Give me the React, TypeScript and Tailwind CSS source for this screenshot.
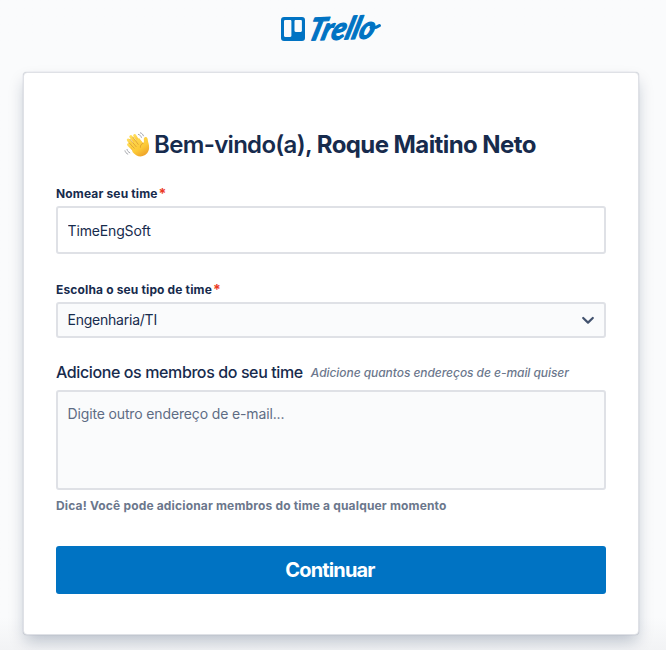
import React from "react";

function TrelloLogo() {
  return (
    <svg width="108" height="44" viewBox="0 0 108 44" className="overflow-visible text-[#0073c3]" role="img" aria-label="Trello">
      <path
        transform="translate(0 12)"
        fill="currentColor"
        fillRule="evenodd"
        d="M3 0h18a3 3 0 0 1 3 3v18a3 3 0 0 1-3 3H3a3 3 0 0 1-3-3V3a3 3 0 0 1 3-3Zm1.200 3a1.200 1.200 0 0 0-1.200 1.200v14.600c0 .7.500 1.200 1.200 1.200h5c.7 0 1.200-.5 1.200-1.200V4.200c0-.7-.5-1.200-1.200-1.200h-5Zm10.500 0c-.7 0-1.200.5-1.200 1.200v9.600c0 .7.500 1.200 1.200 1.200h5c.7 0 1.200-.5 1.200-1.200V4.200c0-.7-.5-1.200-1.200-1.200h-5Z"
      />
      <g
        transform="translate(25.500 35.500) rotate(-2) skewX(-18)"
        fill="currentColor"
        stroke="currentColor"
        strokeWidth="1.300"
        strokeLinejoin="round"
        className="font-['Lato',sans-serif] font-bold italic"
      >
        <text fontSize="31" textLength="66" lengthAdjust="spacingAndGlyphs">
          Trello
        </text>
      </g>
      <path d="M90 22.500q4 1.200 8.500-2" fill="none" stroke="currentColor" strokeWidth="3" strokeLinecap="round" />
    </svg>
  );
}

function WavingHand() {
  return (
    <svg width="26" height="26" viewBox="0 0 26 26" className="shrink-0" aria-hidden="true">
      <defs>
        <linearGradient id="skin" x1="0" y1="0" x2="0.6" y2="1">
          <stop offset="0" stopColor="#ffdc58" />
          <stop offset="0.65" stopColor="#fcc936" />
          <stop offset="1" stopColor="#efa52b" />
        </linearGradient>
      </defs>
      <g fill="none" stroke="url(#skin)" strokeLinecap="round" strokeWidth="3">
        <path d="M13.500 14 6.800 4.600" />
        <path d="M16 12 10.700 3.600" />
        <path d="M11 16 4.300 8" />
        <path d="M10 18 4.600 12.600" />
      </g>
      <path
        fill="url(#skin)"
        d="m7.500 12 7.500-6 4.200 5c.8-.3.800-1.400.6-3.300-.1-1.500.6-2.500 1.800-2.600 1.600-.1 2 1.200 2.300 3.300.3 2.300 1.400 4 1.200 7.700-.2 4-2.800 7-6.400 8-3.800 1-7.500-.8-10.200-4.200Z"
      />
      <g fill="none" stroke="#d99a30" strokeLinecap="round" strokeWidth=".8">
        <path d="m9 5.200 5.200 7.200M6 7.300l6.200 7.400M5.200 11l5 5.200M19.200 11.200c-2 .8-3 2.100-2.800 4.100" />
      </g>
      <g fill="none" stroke="#a4a6ac" strokeLinecap="round" strokeWidth="1">
        <path d="M14.400 2.400c1.500.4 2.500 1.400 3 3M16.400.8c1.500.5 2.500 1.500 3 3M3 17.400c.4 1.700 1.300 2.700 2.800 3.400M1 18.800c.4 1.600 1.300 2.600 2.800 3.300" />
      </g>
    </svg>
  );
}

function Label({ children, htmlFor }: { children: React.ReactNode; htmlFor: string }) {
  return (
    <label htmlFor={htmlFor} className="flex h-4 items-center text-[12px] leading-4 font-bold tracking-[0.150px]">
      {children}
      <span className="ml-[1px] text-[14px] text-[#eb3a25]">*</span>
    </label>
  );
}

export default function App() {
  return (
    <div className="flex h-[650px] w-[666px] flex-col overflow-hidden bg-[#fafbfc] bg-linear-to-b from-[#fafbfc] from-95% to-[#f2f3f5] font-['Inter',sans-serif] text-[#172b4d]">
      <header className="flex h-[72px] shrink-0 pt-[5px] pl-[281px]">
        <TrelloLogo />
      </header>

      <main className="mr-[27px] ml-[23px] flex h-[563px] shrink-0 flex-col rounded-[4px] border border-[#dfe1e6] bg-white px-8 pt-[58px] shadow-[0_8px_16px_-2px_rgba(9,30,66,0.25),0_0_1px_rgba(9,30,66,0.31)]">
        <h1 className="flex h-7 items-center justify-center gap-[4px] pr-[2px] text-[24px] leading-7 font-semibold tracking-[-0.690px] whitespace-nowrap">
          <WavingHand />
          <span>
            Bem-vindo(a), <span className="font-bold tracking-[-0.580px]">Roque Maitino Neto</span>
          </span>
        </h1>

        <form className="mt-[26px] flex flex-col" onSubmit={(e) => e.preventDefault()}>
          <div className="flex flex-col pt-px">
            <Label htmlFor="team-name">Nomear seu time</Label>
          </div>
          <input
            id="team-name"
            defaultValue="TimeEngSoft"
            className="mt-[4px] h-12 rounded-[3px] border-2 border-[#dfe1e6] bg-white px-[9.5px] text-[14px] tracking-[-0.150px] outline-none"
          />

          <div className="mt-[28px] flex flex-col">
            <Label htmlFor="team-type">Escolha o seu tipo de time</Label>
          </div>
          <button
            id="team-type"
            type="button"
            className="mt-[4px] flex h-9 items-center justify-between rounded-[3px] border-2 border-[#dfe1e6] bg-[#fafbfc] pr-[9px] pl-[9.5px] text-[14px] tracking-[-0.230px]"
          >
            <span className="pb-px">Engenharia/TI</span>
            <svg width="14" height="10" viewBox="0 0 14 10" aria-hidden="true">
              <path d="m2.200 3 4.800 4.600 4.800-4.600" fill="none" stroke="#42526e" strokeWidth="2.200" strokeLinecap="round" strokeLinejoin="round" />
            </svg>
          </button>

          <div className="mt-[24px] flex h-5 items-center whitespace-nowrap">
            <label htmlFor="members" className="text-[16px] leading-5 font-medium tracking-[-0.390px]">
              Adicione os membros do seu time
            </label>
            <span className="ml-2 pt-[2px] text-[12px] leading-4 font-medium tracking-[-0.060px] text-[#6b778c] italic">
              Adicione quantos endereços de e-mail quiser
            </span>
          </div>
          <textarea
            id="members"
            placeholder="Digite outro endereço de e-mail..."
            className="mt-[8px] h-[100px] resize-none rounded-[3px] border-2 border-[#dfe1e6] bg-[#fafbfc] px-[9.5px] py-[12px] text-[14px] leading-5 tracking-[-0.140px] outline-none placeholder:text-[#5e6c84]"
          />
          <p className="mt-[8px] text-[12px] leading-4 font-bold tracking-[0.165px] text-[#6b778c]">
            Dica! Você pode adicionar membros do time a qualquer momento
          </p>
          <button type="submit" className="mt-8 h-12 rounded-[3px] bg-[#0073c3] pr-[2px] text-[20px] font-bold tracking-[-0.850px] text-white">
            Continuar
          </button>
        </form>
      </main>
    </div>
  );
}
